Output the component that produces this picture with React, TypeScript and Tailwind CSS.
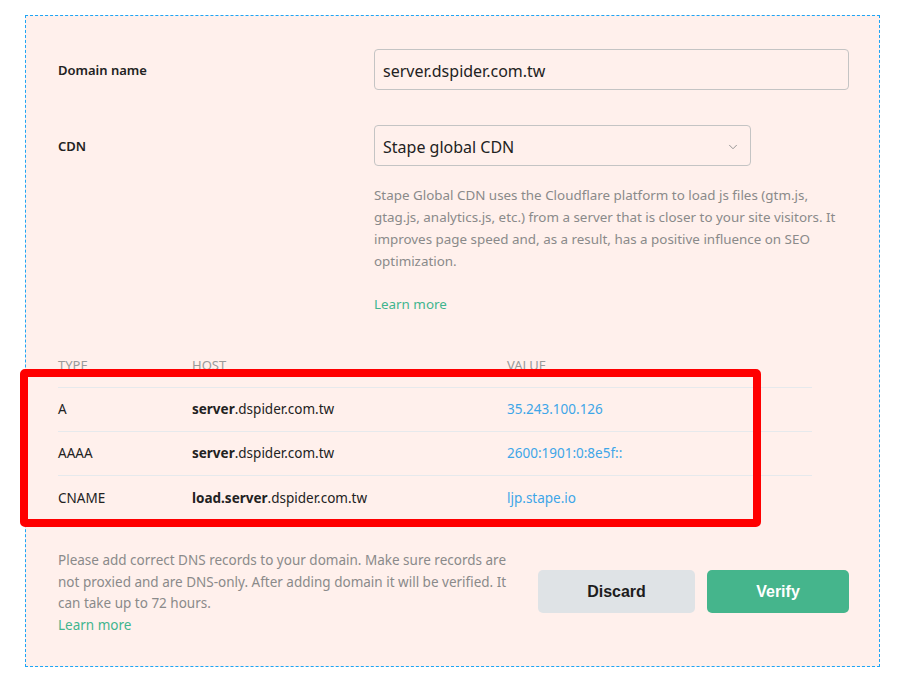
import { ChevronDown } from 'lucide-react';

const records = [
  { type: 'A', bold: 'server', host: '.dspider.com.tw', value: '35.243.100.126' },
  { type: 'AAAA', bold: 'server', host: '.dspider.com.tw', value: '2600:1901:0:8e5f::' },
  { type: 'CNAME', bold: 'load.server', host: '.dspider.com.tw', value: 'ljp.stape.io' },
];

export default function App() {
  return (
    <div className="min-h-screen bg-white pt-[15px] pl-[25px]" style={{ fontFamily: '"Noto Sans", "Open Sans", sans-serif' }}>
      <div className="relative w-[855px] h-[652px] border border-dashed border-[#1ea5f5] bg-[#fff0ec] pl-[32px] pr-[30px] pt-[33px]">
        {/* Domain name */}
        <div className="flex items-center">
          <div className="w-[316px] pt-[3px] text-[13px] font-semibold text-[#222]">Domain name</div>
          <div className="flex-1 h-[41px] border border-[#c4c4c4] rounded-[4px] flex items-center px-[8px] pt-[2px] text-[16px] text-[#222]">
            server.dspider.com.tw
          </div>
        </div>

        {/* CDN */}
        <div className="flex mt-[35px]">
          <div className="w-[316px] h-[41px] pt-[3px] flex items-center text-[13px] font-semibold text-[#222]">CDN</div>
          <div className="flex-1">
            <div className="w-[377px] h-[41px] border border-[#c4c4c4] rounded-[4px] flex items-center justify-between pl-[8px] pr-[10px] pt-[2px] text-[16px] text-[#222]">
              <span>Stape global CDN</span>
              <ChevronDown className="w-[14px] h-[14px] text-[#888]" strokeWidth={1.5} />
            </div>
            <p className="mt-[18px] text-[13.4px] leading-[22px] text-[#8a8a8a] pr-[8px]">
              Stape Global CDN uses the Cloudflare platform to load js files (gtm.js, gtag.js, analytics.js, etc.) from a server that is closer to your site visitors. It improves page speed and, as a result, has a positive influence on SEO optimization.
            </p>
            <div className="mt-[21px] text-[13.4px] leading-[22px] text-[#3fb58e]">Learn more</div>
          </div>
        </div>

        {/* DNS table */}
        <div className="mt-[43px] w-[754px]">
          <div className="flex h-[30px] items-start text-[13px] leading-[15px] uppercase text-[#9a9a9a] border-b border-[#e6e9ec]">
            <div className="w-[134px]">Type</div>
            <div className="w-[315px]">Host</div>
            <div>Value</div>
          </div>
          {records.map((r, i) => (
            <div
              key={r.type}
              className={`flex h-[44px] items-center text-[13.5px] text-[#222] ${i < records.length - 1 ? 'border-b border-[#e6e9ec]' : ''}`}
            >
              <div className="w-[134px]">{r.type}</div>
              <div className="w-[315px]">
                <span className="font-bold">{r.bold}</span>
                {r.host}
              </div>
              <div className="text-[#3ea6e8]">{r.value}</div>
            </div>
          ))}
        </div>

        {/* Footer */}
        <div className="mt-[30px] flex items-start justify-between">
          <div className="w-[452px] text-[13.5px] leading-[21.5px] text-[#8a8a8a]">
            <p>
              Please add correct DNS records to your domain. Make sure records are not proxied and are DNS-only. After adding domain it will be verified. It can take up to 72 hours.
            </p>
            <div className="text-[#3fb58e]">Learn more</div>
          </div>
          <div className="flex gap-[12px] mt-[20px]" style={{ fontFamily: '"Liberation Sans", Arial, sans-serif' }}>
            <button className="w-[157px] h-[43px] rounded-[5px] bg-[#dfe3e6] text-[16px] font-bold text-[#1d1d1d]">Discard</button>
            <button className="w-[142px] h-[43px] rounded-[5px] bg-[#45b58c] text-[16px] font-bold text-white">Verify</button>
          </div>
        </div>

        {/* annotation */}
        <div className="absolute left-[-6px] top-[353px] w-[741px] h-[158px] border-[8px] border-[#ff0000] rounded-[5px] pointer-events-none" />
      </div>
    </div>
  );
}
